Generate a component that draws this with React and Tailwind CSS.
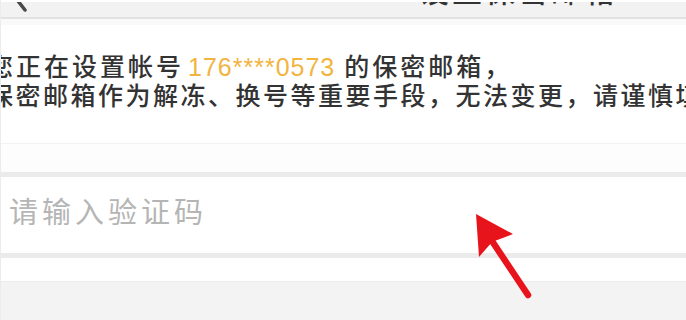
import React from "react";

const cjk = { fontFamily: '"Liberation Sans", "Noto Sans CJK SC", sans-serif' };

export default function App() {
  return (
    <div
      className="relative w-[686px] h-[320px] overflow-hidden bg-white border-l border-[#ececec]"
      style={cjk}
    >
      {/* nav bar, mostly cut off at the top */}
      <div className="relative h-[19px] bg-[#f2f2f2] border-t-2 border-white border-b-2 border-b-[#e2e2e2] overflow-hidden">
        <svg className="absolute left-[8px] top-0" width="24" height="14" viewBox="0 0 24 14">
          <path d="M2 -10 L16 8" stroke="#4a4a4a" strokeWidth="3.5" strokeLinecap="round" fill="none" />
        </svg>
        <div className="pl-[418px] -mt-[25px] text-[30px] leading-[30px] tracking-[3px] font-medium text-[#333]">
          设置保密邮箱
        </div>
      </div>
      <div className="h-[6px] bg-[#f9f9f9]" />

      {/* notice text */}
      <div className="pt-[28px] -ml-[13px] whitespace-nowrap text-[25px] leading-[29px] font-medium text-[#333]">
        <div>
          <span className="tracking-[3px]">您正在设置帐号</span>
          <span className="ml-[4px] mr-[9px] font-normal tracking-[1px] text-[#f2b441]">176****0573</span>
          <span className="tracking-[3px]">的保密邮箱，</span>
        </div>
        <div className="tracking-[2.5px]">保密邮箱作为解冻、换号等重要手段，无法变更，请谨慎填写</div>
      </div>

      <div className="mt-[32px] h-[1px] bg-[#f3f3f3]" />
      <div className="h-[28px] bg-[#fdfdfd]" />

      {/* input */}
      <div className="border-t-[5px] border-[#ebebeb] border-b-[5px] border-b-[#ebebeb] h-[86px] flex items-center bg-white">
        <span className="pl-[8px] -mt-[4px] text-[29px] leading-[34px] tracking-[4px] text-[#b5b5b5]">
          请输入验证码
        </span>
      </div>

      <div className="h-[23px] bg-white" />
      <div className="h-[40px] bg-[#f3f3f3] border-t border-[#ececec]" />

      {/* red annotation arrow */}
      <svg className="absolute left-0 top-0 pointer-events-none" width="686" height="320" viewBox="0 0 686 320">
        <path d="M489 238 L527 295" stroke="#e8141b" strokeWidth="6.5" strokeLinecap="round" />
        <polygon points="475,214 478,257 491,242 512,234" fill="#e8141b" />
      </svg>
    </div>
  );
}
